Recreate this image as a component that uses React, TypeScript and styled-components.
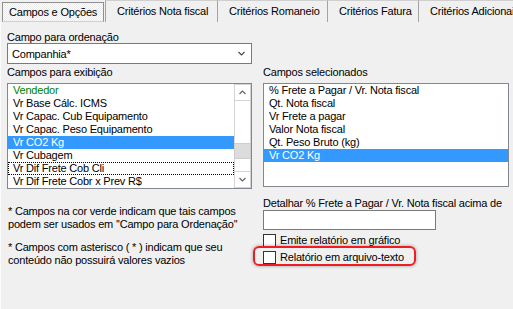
import React from "react";
import styled, { createGlobalStyle, css } from "styled-components";

const GlobalStyle = createGlobalStyle`
  html, body {
    margin: 0;
    padding: 0;
    background: #f0f0f0;
  }
  body {
    font-family: "Liberation Sans", Arial, sans-serif;
    font-size: 11px;
    letter-spacing: -0.2px;
    color: #000;
  }
`;

interface Field {
  label: string;
  selected?: boolean;
  green?: boolean;
  focused?: boolean;
}

const tabs = [
  { label: "Campos e Opções", width: 102, active: true },
  { label: "Critérios Nota fiscal", width: 112 },
  { label: "Critérios Romaneio", width: 110 },
  { label: "Critérios Fatura", width: 91 },
  { label: "Critérios Adicionais", width: 0 },
];

const displayFields: Field[] = [
  { label: "Vendedor", green: true },
  { label: "Vr Base Cálc. ICMS" },
  { label: "Vr Capac. Cub Equipamento" },
  { label: "Vr Capac. Peso Equipamento" },
  { label: "Vr CO2 Kg", selected: true },
  { label: "Vr Cubagem" },
  { label: "Vr Dif Frete Cob Cli", focused: true },
  { label: "Vr Dif Frete Cobr x Prev R$" },
];

const selectedFields: Field[] = [
  { label: "% Frete a Pagar / Vr. Nota fiscal" },
  { label: "Qt. Nota fiscal" },
  { label: "Vr Frete a pagar" },
  { label: "Valor Nota fiscal" },
  { label: "Qt. Peso Bruto (kg)" },
  { label: "Vr CO2 Kg", selected: true },
];

function Chevron(props: { up?: boolean; color?: string }) {
  const pts = props.up ? "0.5,4 3.5,1 6.5,4" : "0.5,1 3.5,4 6.5,1";
  return (
    <svg width="7" height="5" viewBox="0 0 7 5">
      <polyline points={pts} fill="none" stroke={props.color || "#606060"} strokeWidth="1.1" />
    </svg>
  );
}

function App() {
  return (
    <Window>
      <GlobalStyle />
      <TabStrip>
        {tabs.map((t) => (
          <Tab key={t.label} $active={t.active} $width={t.width}>
            {t.label}
          </Tab>
        ))}
      </TabStrip>

      <TabPage>
        <OrderField>
          <FieldLabel>Campo para ordenação</FieldLabel>
          <ComboBox>
            <span>Companhia*</span>
            <Chevron color="#444" />
          </ComboBox>
        </OrderField>

        <Columns>
          <Column>
            <FieldLabel>Campos para exibição</FieldLabel>
            <ListBox $height={106}>
              <ListItems>
                {displayFields.map((f) => (
                  <ListItem key={f.label} $selected={f.selected} $green={f.green} $focused={f.focused}>
                    {f.label}
                  </ListItem>
                ))}
              </ListItems>
              <ScrollBar>
                <ScrollButton>
                  <Chevron up />
                </ScrollButton>
                <ScrollTrack>
                  <ScrollThumb $offset={42} />
                </ScrollTrack>
                <ScrollButton>
                  <Chevron />
                </ScrollButton>
              </ScrollBar>
            </ListBox>

            <Note $gap={16}>
              * Campos na cor verde indicam que tais campos
              <br />
              podem ser usados em ''Campo para Ordenação''
            </Note>
            <Note $gap={10}>
              * Campos com asterisco ( * ) indicam que seu
              <br />
              conteúdo não possuirá valores vazios
            </Note>
          </Column>

          <Column>
            <FieldLabel>Campos selecionados</FieldLabel>
            <ListBox $height={104}>
              <ListItems>
                {selectedFields.map((f) => (
                  <ListItem key={f.label} $selected={f.selected}>
                    {f.label}
                  </ListItem>
                ))}
              </ListItems>
            </ListBox>

            <DetailLabel>Detalhar % Frete a Pagar / Vr. Nota fiscal acima de</DetailLabel>
            <TextField />

            <CheckRow>
              <CheckBox />
              <span>Emite relatório em gráfico</span>
            </CheckRow>
            <CheckRow $highlighted>
              <CheckBox />
              <span>Relatório em arquivo-texto</span>
            </CheckRow>
          </Column>
        </Columns>
      </TabPage>
    </Window>
  );
}

const Window = styled.div`
  width: 513px;
  height: 309px;
  overflow: hidden;
  background: #f0f0f0;
  display: flex;
  flex-direction: column;
`;

const TabStrip = styled.div`
  display: flex;
  height: 22px;
  flex-shrink: 0;
  white-space: nowrap;
`;

const Tab = styled.div<{ $active?: boolean; $width: number }>`
  box-sizing: border-box;
  line-height: 20px;
  overflow: hidden;
  ${(p) => (p.$width ? `width: ${p.$width}px;` : "flex: 1;")}
  ${(p) =>
    p.$active
      ? css`
          height: 20px;
          margin: 2px 1px 0 2px;
          padding-left: 6px;
          line-height: 18px;
          border: 1px solid #8f8f8f;
          border-bottom-color: #d0d0d0;
          background: repeating-conic-gradient(#ffffff 0 25%, #e9e9e9 0 50%) 0 0 / 2px 2px;
        `
      : css`
          height: 22px;
          padding-left: 11px;
          line-height: 22px;
          border-top: 1px solid #cfcfcf;
          border-left: 1px solid #a3a3a3;
          line-height: 20px;
        `}
`;

const TabPage = styled.div`
  flex: 1;
  border-left: 1px solid #fbfbfb;
  padding: 9px 0 0 6px;
`;

const OrderField = styled.div`
  width: 245px;
`;

const FieldLabel = styled.div`
  line-height: 12px;
  height: 12px;
  white-space: nowrap;
`;

const ComboBox = styled.div`
  box-sizing: border-box;
  height: 21px;
  border: 1px solid #7a7a7a;
  background: #fff;
  display: flex;
  align-items: center;
  justify-content: space-between;
  padding: 0 6px 0 4px;
`;

const Columns = styled.div`
  display: grid;
  grid-template-columns: 245px 246px;
  column-gap: 11px;
  margin-top: 2px;
`;

const Column = styled.div`
  display: flex;
  flex-direction: column;
  align-items: flex-start;
`;

const ListBox = styled.div<{ $height: number }>`
  box-sizing: border-box;
  margin-top: 5px;
  width: 100%;
  height: ${(p) => p.$height}px;
  border: 1px solid #828790;
  background: #fff;
  display: flex;
`;

const ListItems = styled.div`
  flex: 1;
  overflow: hidden;
`;

const ListItem = styled.div<{ $selected?: boolean; $green?: boolean; $focused?: boolean }>`
  height: 13px;
  line-height: 13px;
  padding-left: 5px;
  white-space: nowrap;
  color: ${(p) => (p.$selected ? "#fff" : p.$green ? "#008000" : "#000")};
  background: ${(p) => (p.$selected ? "#3399ff" : "transparent")};
  ${(p) =>
    p.$focused &&
    css`
      outline: 1px dotted #000;
      outline-offset: -1px;
    `}
`;

const ScrollBar = styled.div`
  width: 17px;
  display: flex;
  flex-direction: column;
  box-sizing: border-box;
  border-left: 1px solid #d4d4d4;
  border-right: 1px solid #d4d4d4;
  background: #fff;
`;

const ScrollButton = styled.div`
  box-sizing: border-box;
  height: 17px;
  border: 1px solid #d4d4d4;
  margin: 0 -1px;
  display: flex;
  align-items: center;
  justify-content: center;
  background: #fff;
`;

const ScrollTrack = styled.div`
  flex: 1;
  display: flex;
  flex-direction: column;
`;

const ScrollThumb = styled.div<{ $offset: number }>`
  box-sizing: border-box;
  margin: ${(p) => p.$offset}px -1px 0;
  height: 16px;
  background: #dcdcdc;
  border: 1px solid #cdcdcd;
`;

const Note = styled.div<{ $gap: number }>`
  margin-top: ${(p) => p.$gap}px;
  padding-left: 1px;
  line-height: 13px;
  white-space: nowrap;
`;

const DetailLabel = styled.div`
  margin-top: 10px;
  line-height: 12px;
  white-space: nowrap;
`;

const TextField = styled.div`
  box-sizing: border-box;
  margin-top: 1px;
  width: 173px;
  height: 20px;
  border: 1px solid #7a7a7a;
  background: #fff;
`;

const CheckRow = styled.div<{ $highlighted?: boolean }>`
  position: relative;
  display: flex;
  align-items: center;
  gap: 4px;
  height: 13px;
  line-height: 13px;
  margin-top: 4px;
  white-space: nowrap;
  ${(p) =>
    p.$highlighted &&
    css`
      &::after {
        content: "";
        position: absolute;
        left: -10px;
        top: -5px;
        width: 163px;
        height: 20px;
        box-sizing: border-box;
        border: 2px solid #f01c24;
        border-radius: 6px;
        box-shadow: 0 0 3px 1px rgba(0, 0, 0, 0.22);
        pointer-events: none;
      }
    `}
`;

const CheckBox = styled.div`
  box-sizing: border-box;
  width: 13px;
  height: 13px;
  border: 1px solid #333;
  background: #fff;
  flex-shrink: 0;
`;

export default App;
